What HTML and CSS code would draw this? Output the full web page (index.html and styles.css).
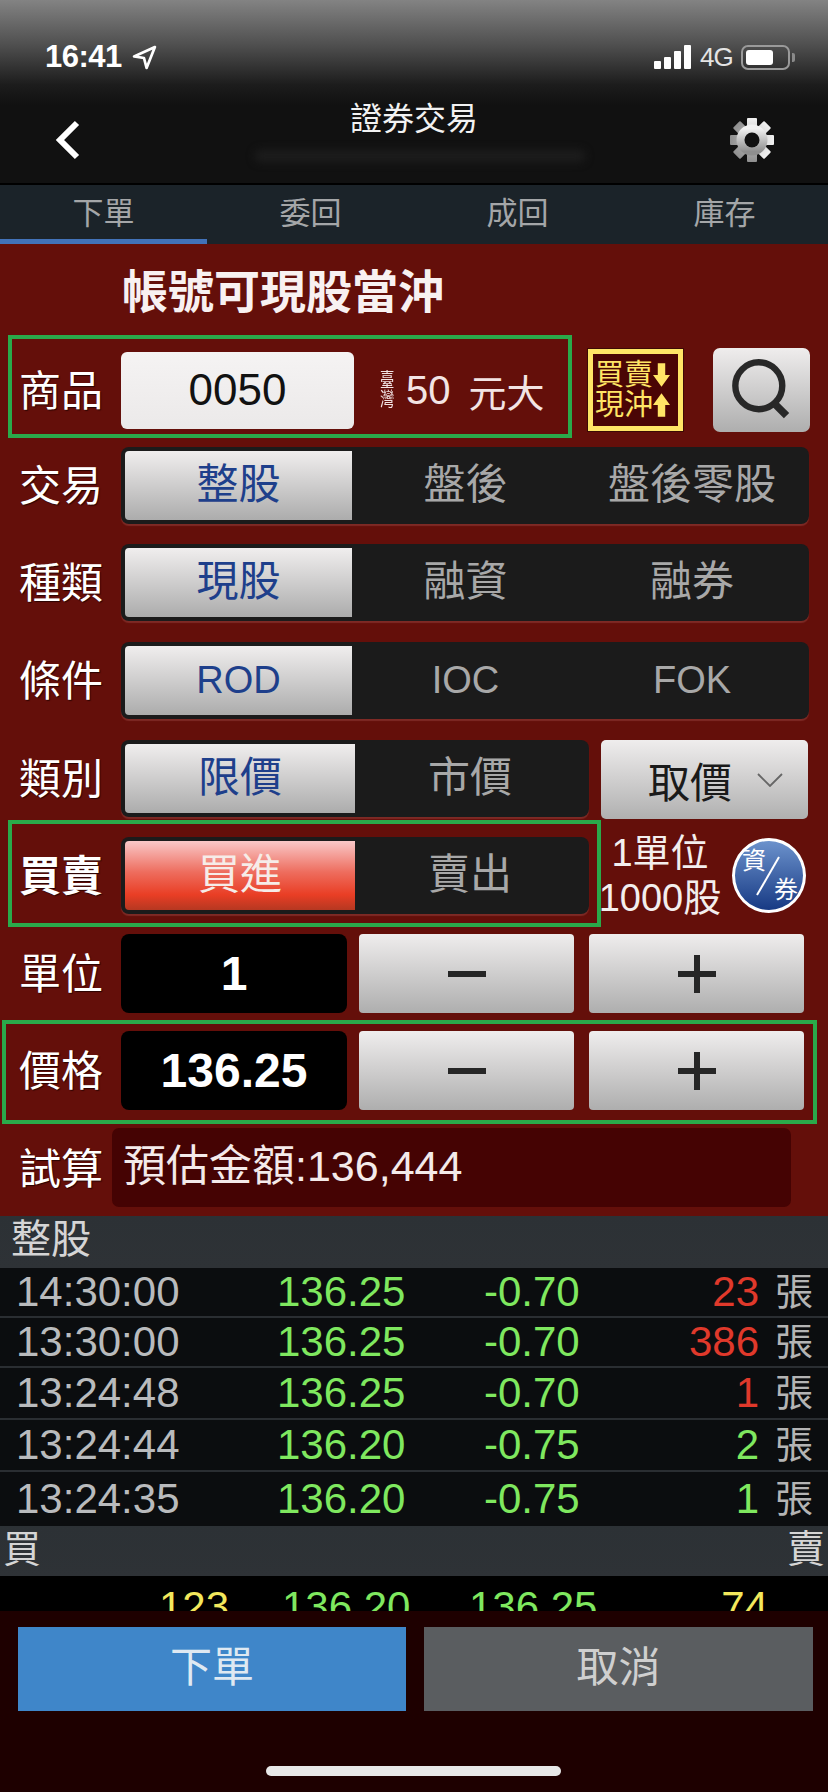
FILE: index.html
```html
<!DOCTYPE html>
<html lang="zh-Hant">
<head>
<meta charset="utf-8">
<title>證券交易</title>
<link rel="stylesheet" href="styles.css">
</head>
<body>
<div class="app">
  <header class="top">
    <div class="status">
      <div class="status-left">
        <span class="clock">16:41</span>
        <svg class="loc" viewBox="0 0 24 24" width="25" height="25"><path d="M22 2 2 11l9.5 1.5L14 22z" fill="none" stroke="#fff" stroke-width="2.6" stroke-linejoin="round"/></svg>
      </div>
      <div class="status-right">
        <div class="signal"><i class="b1"></i><i class="b2"></i><i class="b3"></i><i class="b4"></i></div>
        <span class="net">4G</span>
        <div class="battery"><div class="battery-fill"></div></div>
        <div class="battery-tip"></div>
      </div>
    </div>
    <div class="nav">
      <svg class="back" viewBox="0 0 26 40" width="26" height="40"><path d="M22 3 5 20l17 17" fill="none" stroke="#fff" stroke-width="6"/></svg>
      <div class="nav-title">證券交易</div>
      <div class="smudge"></div>
      <svg class="gear" viewBox="0 0 46 46" width="46" height="46">
        <defs><linearGradient id="gearFill" x1="0" y1="0" x2="0" y2="1"><stop offset="0" stop-color="#f2f2f2"/><stop offset="1" stop-color="#8f8f8f"/></linearGradient></defs>
        <g fill="url(#gearFill)">
          <rect x="18" y="1" width="10" height="44" rx="1"/>
          <rect x="18" y="1" width="10" height="44" rx="1" transform="rotate(45 23 23)"/>
          <rect x="18" y="1" width="10" height="44" rx="1" transform="rotate(90 23 23)"/>
          <rect x="18" y="1" width="10" height="44" rx="1" transform="rotate(135 23 23)"/>
        </g>
        <circle cx="23" cy="23" r="11.5" fill="none" stroke="url(#gearFill)" stroke-width="8"/>
        <circle cx="23" cy="23" r="7.5" fill="#111"/>
      </svg>
    </div>
  </header>

  <nav class="tabs">
    <div class="tab tab-on">下單</div>
    <div class="tab">委回</div>
    <div class="tab">成回</div>
    <div class="tab">庫存</div>
  </nav>

  <main class="form">
    <h1 class="form-title">帳號可現股當沖</h1>

    <div class="row row-first">
      <div class="mark mark-product"></div>
      <div class="label">商品</div>
      <div class="code">0050</div>
      <div class="product-name"><span class="tiny"><span>臺</span><span>灣</span></span><span class="pn-num">50</span><span class="pn-name">元大</span></div>
      <div class="daytrade">
        <div class="dt-line"><span>買賣</span><svg viewBox="0 0 16 24" width="17" height="26"><path d="M4.5 1h7v11H16l-8 11-8-11h4.5z" fill="#ffe566"/></svg></div>
        <div class="dt-line"><span>現沖</span><svg viewBox="0 0 16 24" width="17" height="26"><path d="M4.5 23h7V12H16L8 1 0 12h4.5z" fill="#ffe566"/></svg></div>
      </div>
      <div class="search">
        <svg viewBox="0 0 60 60" width="64" height="64"><circle cx="27" cy="26" r="22" fill="none" stroke="#282828" stroke-width="6"/><path d="M41 42l12 12" stroke="#282828" stroke-width="7"/></svg>
      </div>
    </div>

    <div class="row gap15">
      <div class="label">交易</div>
      <div class="seg seg-wide"><div class="opt opt-on">整股</div><div class="opt">盤後</div><div class="opt">盤後零股</div></div>
    </div>

    <div class="row gap20">
      <div class="label">種類</div>
      <div class="seg seg-wide"><div class="opt opt-on">現股</div><div class="opt">融資</div><div class="opt">融券</div></div>
    </div>

    <div class="row gap21">
      <div class="label">條件</div>
      <div class="seg seg-wide"><div class="opt opt-on latin">ROD</div><div class="opt latin">IOC</div><div class="opt latin">FOK</div></div>
    </div>

    <div class="row gap21">
      <div class="label">類別</div>
      <div class="seg seg-half"><div class="opt opt-on">限價</div><div class="opt">市價</div></div>
      <div class="pick">
        <span>取價</span>
        <svg viewBox="0 0 26 14" width="26" height="14"><path d="M1 1l12 12L25 1" fill="none" stroke="#666" stroke-width="1.8"/></svg>
      </div>
    </div>

    <div class="row gap20">
      <div class="mark mark-side"></div>
      <div class="label label-strong">買賣</div>
      <div class="seg seg-half"><div class="opt opt-buy">買進</div><div class="opt">賣出</div></div>
      <div class="lot"><div>1單位</div><div>1000股</div></div>
      <div class="credit"><span class="cr-a">資</span><i class="cr-slash"></i><span class="cr-b">券</span></div>
    </div>

    <div class="row row-tall gap20">
      <div class="label">單位</div>
      <div class="value">1</div>
      <div class="step"><svg viewBox="0 0 38 38" width="38" height="38"><rect y="16" width="38" height="6" fill="#262626"/></svg></div>
      <div class="step"><svg viewBox="0 0 38 38" width="38" height="38"><path d="M0 16h16V0h6v16h16v6H22v16h-6V22H0z" fill="#262626"/></svg></div>
    </div>

    <div class="row row-tall gap18">
      <div class="mark mark-price"></div>
      <div class="label">價格</div>
      <div class="value">136.25</div>
      <div class="step"><svg viewBox="0 0 38 38" width="38" height="38"><rect y="16" width="38" height="6" fill="#262626"/></svg></div>
      <div class="step"><svg viewBox="0 0 38 38" width="38" height="38"><path d="M0 16h16V0h6v16h16v6H22v16h-6V22H0z" fill="#262626"/></svg></div>
    </div>

    <div class="row row-tall gap18">
      <div class="label label-trial">試算</div>
      <div class="estimate">預估金額:136,444</div>
    </div>
  </main>

  <section class="quotes">
    <div class="band band-single">整股</div>
    <div class="trade t50"><span class="time">14:30:00</span><span class="down">136.25</span><span class="down">-0.70</span><span class="qty up">23</span><span class="unit">張</span></div>
    <div class="trade t50"><span class="time">13:30:00</span><span class="down">136.25</span><span class="down">-0.70</span><span class="qty up">386</span><span class="unit">張</span></div>
    <div class="trade t52"><span class="time">13:24:48</span><span class="down">136.25</span><span class="down">-0.70</span><span class="qty up">1</span><span class="unit">張</span></div>
    <div class="trade t52"><span class="time">13:24:44</span><span class="down">136.20</span><span class="down">-0.75</span><span class="qty down">2</span><span class="unit">張</span></div>
    <div class="trade t54"><span class="time">13:24:35</span><span class="down">136.20</span><span class="down">-0.75</span><span class="qty down">1</span><span class="unit">張</span></div>
    <div class="band band-split"><span>買</span><span>賣</span></div>
    <div class="book"><span class="bid">123</span><span></span><span class="down">136.20</span><span class="down">136.25</span><span class="ask">74</span></div>
  </section>

  <footer class="actions">
    <div class="action-row">
      <div class="act act-go">下單</div>
      <div class="act act-no">取消</div>
    </div>
    <div class="home"></div>
  </footer>
</div>
</body>
</html>
```
FILE: styles.css
```css
* { box-sizing: border-box; }
html, body { margin: 0; padding: 0; }
body {
  width: 828px;
  height: 1792px;
  overflow: hidden;
  background: #1e0000;
  color: #fff;
  font-family: "Liberation Sans", "Noto Sans CJK TC", sans-serif;
}
.app { width: 828px; height: 1792px; display: flex; flex-direction: column; }

/* top */
.top {
  height: 185px;
  background: linear-gradient(#838383 0, #4f4f4f 45px, #1c1c1c 85px, #111 105px, #111 100%);
  border-bottom: 2px solid #000;
}
.status { height: 84px; padding: 30px 33px 0 45px; display: flex; justify-content: space-between; align-items: center; }
.status-left { display: flex; align-items: center; gap: 10px; }
.clock { font-size: 31px; font-weight: 700; letter-spacing: -.5px; color: #fff; }
.status-right { display: flex; align-items: center; }
.signal { display: flex; align-items: flex-end; gap: 3px; height: 24px; margin-right: 9px; }
.signal i { display: block; width: 7px; background: #fff; border-radius: 1px; }
.b1 { height: 8px; } .b2 { height: 12px; } .b3 { height: 18px; } .b4 { height: 24px; }
.net { font-size: 26px; color: #e4e4e4; width: 32px; margin-right: 9px; letter-spacing: -1px; }
.battery { width: 49px; height: 25px; border: 2px solid #9a9a9a; border-radius: 7px; padding: 3px; }
.battery-fill { width: 27px; height: 100%; background: #fff; border-radius: 3px; }
.battery-tip { width: 3px; height: 9px; background: #8a8a8a; margin-left: 2px; border-radius: 0 2px 2px 0; }
.nav { height: 99px; padding: 32px 53px 0 55px; position: relative; display: flex; justify-content: space-between; }
.back { margin-top: 4px; }
.nav-title { font-size: 32px; line-height: 40px; color: #f2f2f2; position: absolute; left: 0; right: 0; top: 0; text-align: center; padding-top: 15px; }
.smudge { position: absolute; left: 255px; top: 66px; width: 330px; height: 12px; background: #1d1d1d; filter: blur(4px); border-radius: 8px; }
.gear { margin-top: 1px; }

/* tabs */
.tabs { height: 59px; background: #1b2329; display: grid; grid-template-columns: repeat(4, 207px); }
.tab { font-size: 31px; color: #a4a6a8; text-align: center; line-height: 48px; padding-top: 5px; }
.tab-on { border-bottom: 5px solid #4272b8; }

/* form */
.form { height: 972px; background: #640f0a; padding-left: 21px; }
.form-title { margin: 0; padding-left: 101px; font-size: 46px; line-height: 56px; padding-top: 20px; height: 104px; font-weight: 700; color: #f8f1f1; }
.row { display: flex; align-items: center; position: relative; height: 77px; }
.row-first { height: 84px; }
.row-tall { height: 79px; }
.gap15 { margin-top: 15px; }
.gap18 { margin-top: 18px; }
.gap20 { margin-top: 20px; }
.gap21 { margin-top: 21px; }
.label { width: 100px; margin-left: -2px; margin-right: 2px; padding-bottom: 6px; flex: none; font-size: 42px; color: #fff; text-shadow: 1px 1px 1px #2a0402; }
.label-strong { font-weight: 700; }
.label-trial { width: 93px; margin-right: 0; padding-bottom: 4px; }

.mark { position: absolute; border: 4px solid #2aaa4a; pointer-events: none; }
.mark-product { left: -13px; top: -13px; width: 564px; height: 103px; }
.mark-side { left: -13px; top: -17px; width: 593px; height: 107px; }
.mark-price { left: -19px; top: -11px; width: 815px; height: 104px; }

.code { width: 233px; height: 77px; flex: none; background: linear-gradient(#f5f3f3, #ebe9e9); border-radius: 6px; color: #111; font-size: 44px; line-height: 75px; text-align: center; }
.product-name { width: 234px; flex: none; display: flex; align-items: center; padding-left: 26px; color: #f3e4e4; }
.tiny { display: flex; flex-direction: column; width: 18px; font-size: 19px; line-height: 19px; margin-right: 8px; transform: scaleX(.75); transform-origin: left center; }
.pn-num { font-size: 40px; }
.pn-name { font-size: 38px; margin-left: 18px; }
.daytrade { width: 95px; height: 82px; flex: none; background: #4a0505; border: 5px solid #ffe566; color: #ffe566; display: flex; flex-direction: column; justify-content: center; padding-left: 2px; outline: 1px solid #3c0a06; }
.dt-line { display: flex; align-items: center; height: 30px; gap: 0; font-size: 29px; line-height: 30px; }
.search { width: 97px; height: 84px; flex: none; margin-left: 30px; border-radius: 7px; background: linear-gradient(#efeded, #aeaeae); display: flex; align-items: center; justify-content: center; }

.seg { height: 77px; flex: none; display: grid; background: #1b1b1b; border-radius: 8px; padding: 4px; box-shadow: 0 2px 1px #7e2a25; }
.seg-wide { width: 688px; grid-template-columns: 227px 227px 226px; }
.seg-half { width: 468px; grid-template-columns: 230px 230px; }
.opt { font-size: 42px; line-height: 68px; text-align: center; color: #a8a8a8; }
.latin { font-size: 38px; }
.opt-on { background: linear-gradient(#f0eeee, #acacac); border-radius: 4px 0 0 4px; color: #1e3f8b; }
.opt-buy { background: linear-gradient(#f9c8c8 0, #ee6d5e 45%, #e93e25 78%, #b53821 100%); border-radius: 4px 0 0 4px; color: #f6ece8; }

.pick { width: 207px; height: 79px; flex: none; margin: 2px 0 0 12px; border-radius: 5px; background: linear-gradient(#efeded, #b0b0b0); color: #1a1a1a; display: flex; align-items: center; gap: 25px; padding-left: 47px; font-size: 42px; }
.lot { width: 130px; flex: none; margin-left: 6px; font-size: 38px; line-height: 45px; text-align: center; color: #f3eeee; white-space: nowrap; }
.credit { width: 74px; height: 75px; flex: none; margin-left: 7px; border-radius: 50%; background: linear-gradient(#6c92cc, #173a84); border: 3px solid #fff; position: relative; color: #fff; font-size: 24px; line-height: 28px; }
.cr-a { position: absolute; left: 7px; top: 6px; }
.cr-b { position: absolute; right: 5px; bottom: 6px; }
.cr-slash { position: absolute; left: 32px; top: 13px; width: 2px; height: 44px; background: #fff; transform: rotate(30deg); }

.value { width: 226px; height: 79px; flex: none; background: #000; border-radius: 8px; text-align: center; font-size: 48px; font-weight: 700; line-height: 79px; color: #fff; }
.step { width: 215px; height: 79px; flex: none; margin-left: 12px; border-radius: 4px; background: linear-gradient(#efeded, #aeaeae); display: flex; align-items: center; justify-content: center; }
.step + .step { margin-left: 15px; }

.estimate { width: 679px; height: 79px; flex: none; background: #450303; border-radius: 7px; padding-left: 11px; font-size: 43px; line-height: 77px; color: #f4eaea; }

/* quotes */
.quotes { height: 395px; background: #0b0d0f; }
.band { height: 52px; background: linear-gradient(#2c3135, #2e3236); font-size: 40px; line-height: 46px; color: #d5d5d5; }
.band-single { padding-left: 11px; }
.band-split { height: 50px; display: flex; justify-content: space-between; padding: 0 3px; font-size: 38px; }
.trade { display: grid; grid-template-columns: 261px 207px 140px 135px 1fr; padding-left: 16px; align-items: center; font-size: 42px; border-bottom: 2px solid #2a2e32; }
.t50 { height: 50px; } .t52 { height: 52px; } .t54 { height: 54px; border-bottom: 0; }
.time { color: #b9bbbd; }
.down { color: #7fe85f; }
.up { color: #e0392b; }
.qty { text-align: right; }
.unit { color: #b4b4b4; font-size: 38px; padding-left: 16px; line-height: 44px; }
.book { height: 36px; overflow: hidden; background: #000; display: grid; grid-template-columns: 229px 53px 187px 150px 149px; font-size: 42px; line-height: 47px; padding-top: 7px; }
.bid { color: #f3e85c; text-align: right; }
.ask { color: #f3e85c; text-align: right; }

/* footer */
.actions { flex: 1; background: #1e0000; padding: 16px 15px 0 18px; }
.action-row { display: flex; gap: 18px; }
.act { height: 84px; font-size: 42px; line-height: 82px; text-align: center; }
.act-go { width: 388px; background: #3f86c9; color: #dfe9f2; }
.act-no { width: 389px; background: #5a5d60; color: #cfcfcf; }
.home { width: 295px; height: 10px; border-radius: 5px; background: #e8e8e8; margin: 55px 0 0 248px; }
```
